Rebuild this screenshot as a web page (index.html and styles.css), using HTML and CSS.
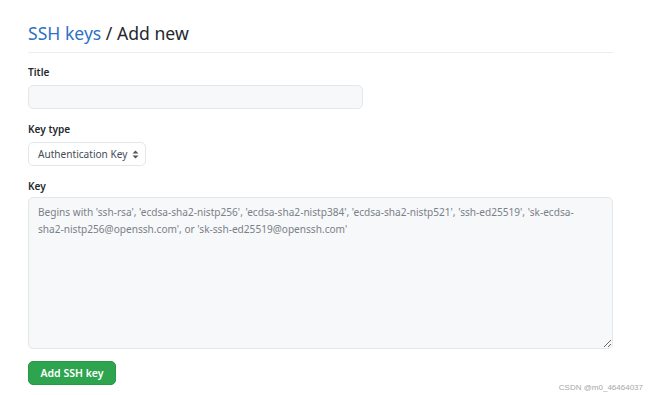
FILE: index.html
```
<!DOCTYPE html>
<html>
<head>
	<title>Add new SSH key</title>
	<meta name="viewport" content="width=device-width, initial-scale=1" />
	<link rel="stylesheet" href="styles.css">
</head>
<body>
	<div class="page">
		<h1 class="subhead"><a href="#" class="crumb">SSH keys</a> / Add new</h1>
		<form class="key-form">
			<div class="form-group">
				<label for="title">Title</label>
				<input type="text" id="title" class="form-control input-title" value="" />
			</div>
			<div class="form-group">
				<label for="key-type">Key type</label>
				<div class="select-wrap">
					<select id="key-type" class="form-control select-type">
						<option>Authentication Key</option>
						<option>Signing Key</option>
					</select>
					<svg class="select-caret" width="7" height="9" viewBox="0 0 7 9"><path d="M3.5 0.5 L6.5 3.5 H0.5 Z M3.5 8.5 L6.5 5.5 H0.5 Z" fill="#555"/></svg>
				</div>
			</div>
			<div class="form-group group-key">
				<label for="key">Key</label>
				<textarea id="key" class="form-control input-key" placeholder="Begins with 'ssh-rsa', 'ecdsa-sha2-nistp256', 'ecdsa-sha2-nistp384', 'ecdsa-sha2-nistp521', 'ssh-ed25519', 'sk-ecdsa-sha2-nistp256@openssh.com', or 'sk-ssh-ed25519@openssh.com'"></textarea>
			</div>
			<button type="button" class="btn-primary">Add SSH key</button>
		</form>
	</div>
	<div class="watermark">CSDN @m0_46464037</div>
</body>
</html>
```

FILE: styles.css
```
	body {
		margin: 0;
		background-color: #FFFFFF;
		color: #24292E;
		font-family: "Noto Sans", "Open Sans", sans-serif;
		font-size: 10.1px;
	}

	.page {
		width: 585px;
		padding: 20px 28px 0 28px;
	}

	.subhead {
		margin: 0;
		padding-bottom: 6px;
		border-bottom: 1px solid #EEEEEE;
		font-size: 17.6px;
		font-weight: 400;
		line-height: 26px;
	}

	.crumb {
		color: #2F72C4;
		text-decoration: none;
	}

	.key-form {
		margin-top: 11px;
	}

	.form-group {
		margin-bottom: 12px;
	}

	.form-group label {
		display: block;
		font-weight: 600;
		line-height: 16px;
		margin-bottom: 5px;
	}

	.group-key label {
		margin-bottom: 3px;
	}

	.form-control {
		box-sizing: border-box;
		background-color: #F6F8FA;
		border: 1px solid #E4E7EA;
		border-radius: 5px;
		font-family: inherit;
		font-size: 10.1px;
		color: #24292E;
	}

	.input-title {
		display: block;
		width: 335px;
		height: 24px;
	}

	.select-wrap {
		position: relative;
		display: inline-block;
	}

	.select-type {
		-webkit-appearance: none;
		appearance: none;
		background-color: #FFFFFF;
		width: 118px;
		height: 24px;
		padding: 0 0 0 9px;
		color: #444D56;
	}

	.select-caret {
		position: absolute;
		right: 7px;
		top: 8px;
		pointer-events: none;
	}

	.input-key {
		display: block;
		width: 585px;
		height: 152px;
		padding: 6px 30px 6px 9px;
		line-height: 17px;
		resize: vertical;
	}

	.input-key::placeholder {
		color: #7A8088;
	}

	.btn-primary {
		background-color: #2EA44F;
		color: #FFFFFF;
		border: 1px solid #2A9647;
		border-radius: 5px;
		width: 88px;
		height: 24px;
		font-family: inherit;
		font-size: 10.5px;
		font-weight: 600;
	}

	.watermark {
		position: absolute;
		right: 7px;
		bottom: 3px;
		font-family: "Liberation Sans", sans-serif;
		font-size: 8px;
		color: #A8A8A8;
	}
```
